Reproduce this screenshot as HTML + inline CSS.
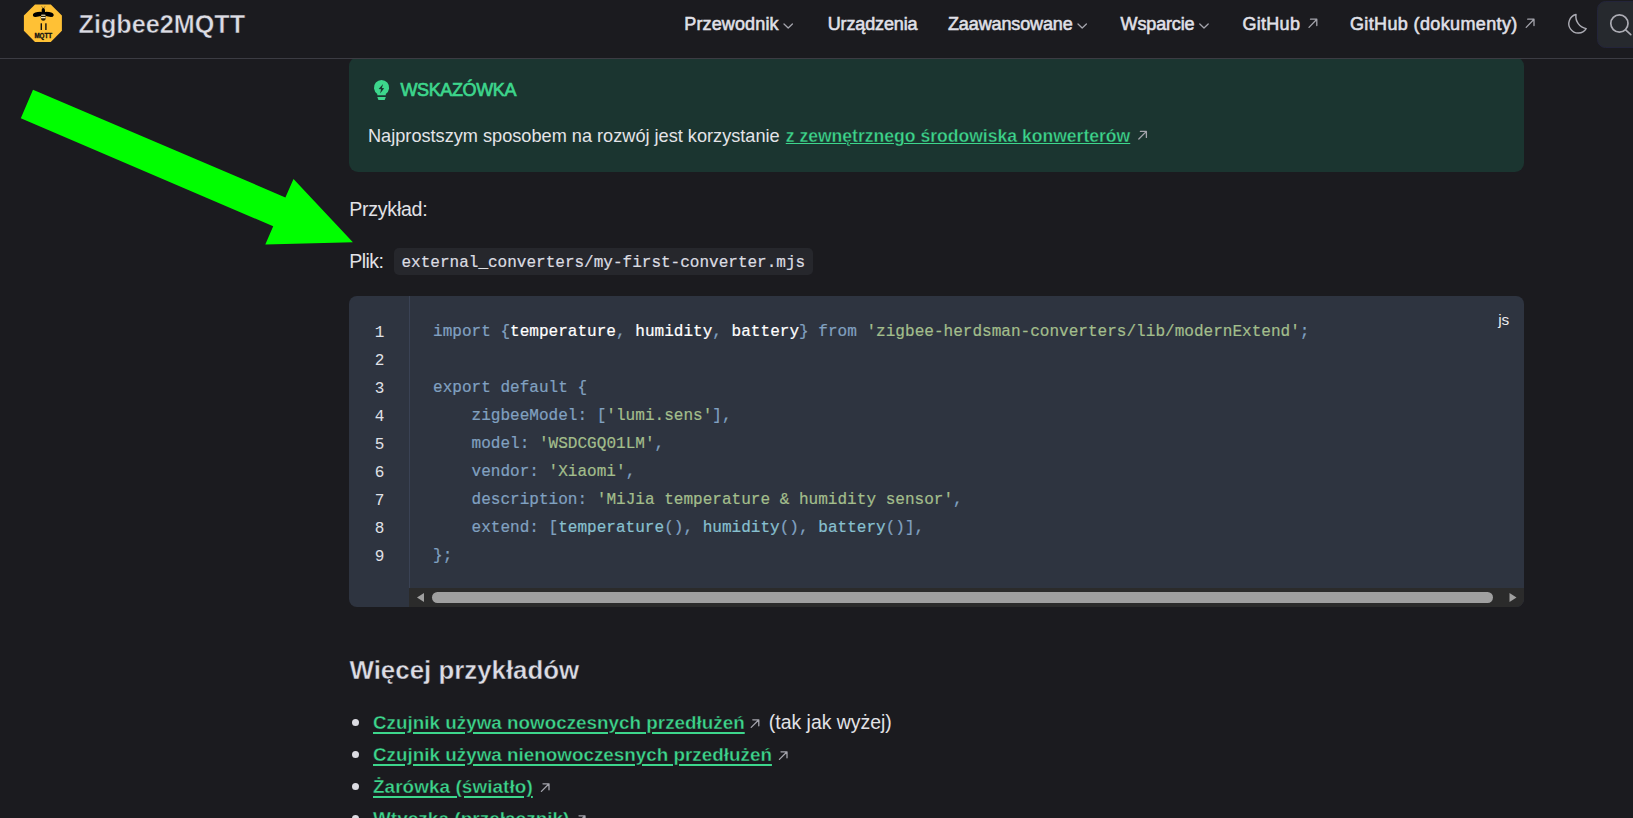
<!DOCTYPE html>
<html lang="pl">
<head>
<meta charset="utf-8">
<title>Zigbee2MQTT</title>
<style>
*{box-sizing:border-box;margin:0;padding:0}
html,body{width:1633px;height:818px;overflow:hidden;background:#1b1b1f;color:#e2e2e6;font-family:"Liberation Sans",sans-serif;}
body{position:relative}
.abs{position:absolute;white-space:nowrap}
#nav{position:absolute;left:0;top:0;width:1633px;height:59px;background:#1b1b1f;border-bottom:1px solid #3c3c43}
#brand{left:78.6px;top:9.3px;font-size:25.2px;line-height:30px;font-weight:700;color:#dcdce4;-webkit-text-stroke:0.5px #1b1b1f}
.nl{top:12.4px;font-size:18px;line-height:24px;font-weight:400;color:#e0e0e8;-webkit-text-stroke:0.55px #e0e0e8}
#search{position:absolute;left:1597px;top:1px;width:50px;height:46.5px;border-radius:8.5px;background:#26292e;border:1px solid #23243a}
#tip{position:absolute;left:349px;top:57px;width:1175px;height:115px;background:#1b3530;border-radius:9px}
#tiptitle{left:400.4px;top:78.2px;font-size:18px;line-height:24px;font-weight:400;letter-spacing:-0.36px;color:#3dd68c;-webkit-text-stroke:0.7px #3dd68c}
#tiptext{left:368px;top:123px;font-size:18.16px;line-height:26px;color:#e4e4e8}
#tiptext a{font-size:17.57px;margin-left:1px;text-underline-offset:1px;text-decoration-thickness:1.2px}
a.g{color:#3dd68c;font-weight:700;text-decoration:underline;text-decoration-thickness:1.5px;text-underline-offset:2px}
.p{left:349.3px;font-size:19.6px;line-height:28px;color:#e2e2e6}
#icode{left:394px;top:248px;height:27px;width:419px;background:#26272c;border-radius:5px}
#icodet{left:401.5px;top:251.2px;-webkit-text-stroke-width:0.2px;font-family:"Liberation Mono",monospace;font-size:16.03px;line-height:24px;color:#dcdde2}
#code{position:absolute;left:349px;top:296px;width:1175px;height:311px;background:#2e3440;border-radius:8px;overflow:hidden}
#gutter{position:absolute;left:0;top:0;width:61px;height:311px;border-right:1px solid #3a4254}
.ln{position:absolute;left:0;width:61px;text-align:center;font-family:"Liberation Mono",monospace;font-size:16px;line-height:28px;color:#e0e2e8}
pre{position:absolute;left:84px;top:21.6px;-webkit-text-stroke-width:0.2px;font-family:"Liberation Mono",monospace;font-size:16.06px;line-height:28px;color:#81a1c1}
.k,.b,.pr,.pp{color:#81a1c1}.w{color:#ffffff}.s{color:#a3be8c}.f{color:#88c0d0}
#js{left:1498.2px;top:307.8px;font-size:15.4px;line-height:24px;color:#ececf0}
#sb{position:absolute;left:60px;top:292px;width:1115px;height:19px;background:#2b2b2b}
#thumb{position:absolute;left:23px;top:4px;width:1061px;height:11px;border-radius:6px;background:#a0a0a0}
h2{left:349.5px;top:650.8px;font-size:25.87px;line-height:38px;font-weight:700;color:#dcdce4;-webkit-text-stroke:0.4px #1b1b1f}
.li{left:373px;font-size:19.43px;line-height:32px;color:#e2e2e6}
.li a{font-size:18.85px;text-underline-offset:2.8px}
.dot{position:absolute;left:351.8px;width:7.4px;height:7.4px;border-radius:50%;background:#dcdce2}
svg{position:absolute;overflow:visible}
.ic{fill:none;stroke:#a4a4ac;stroke-width:1.3;stroke-linecap:round;stroke-linejoin:round}
a.g span{-webkit-text-stroke:0.35px #1b1b1f}#tiptext a.g span{-webkit-text-stroke:0.35px #1b3530}</style>
</head>
<body>
<div id="tip"></div>
<div id="nav"></div>
<svg id="logo" style="left:0;top:0" width="70" height="50" viewBox="0 0 70 50">
<polygon points="35,4.4 50.8,4.4 61.9,15.5 61.9,30.8 50.8,41.9 35,41.9 23.9,30.8 23.9,15.5" fill="#ffc135"/>
<ellipse cx="38" cy="14.3" rx="5.2" ry="2.3" transform="rotate(-12 38 14.3)" fill="#000"/>
<ellipse cx="48.6" cy="14.3" rx="5.2" ry="2.3" transform="rotate(12 48.6 14.3)" fill="#000"/>
<ellipse cx="43.3" cy="11.3" rx="1.7" ry="3.3" fill="#000"/>
<ellipse cx="43.3" cy="17.2" rx="2.5" ry="3.5" fill="#2a2208"/>
<path d="M41.2 15.3h4.2M41 17.6h4.6" stroke="#fff0c8" stroke-width="1.1" fill="none"/>
<path d="M41.6 6.3l1.5 2.4M45 6.3l-1.5 2.4" stroke="#222" stroke-width="0.5" fill="none"/>
<rect x="40.6" y="23.3" width="1.4" height="6.7" fill="#111"/>
<rect x="45.2" y="23.3" width="1.4" height="6.7" fill="#111"/>
<text x="43.3" y="37.7" text-anchor="middle" font-family="Liberation Sans, sans-serif" font-weight="700" font-size="6.3" fill="#111" stroke="#111" stroke-width="0.3">MQTT</text>
</svg>
<div id="brand" class="abs">Zigbee2MQTT</div>
<div class="abs nl" style="left:684.3px;letter-spacing:0.13px">Przewodnik</div>
<div class="abs nl" style="left:827.7px;letter-spacing:-0.13px">Urządzenia</div>
<div class="abs nl" style="left:948px;letter-spacing:-0.13px">Zaawansowane</div>
<div class="abs nl" style="left:1120.6px;letter-spacing:-0.15px">Wsparcie</div>
<div class="abs nl" style="left:1242.5px;letter-spacing:0.28px">GitHub</div>
<div class="abs nl" style="left:1350px;letter-spacing:0.37px">GitHub (dokumenty)</div>
<svg style="left:0;top:0" width="1633" height="58" viewBox="0 0 1633 58">
<path class="ic" d="M784 24l4.2 4 4.2-4"/>
<path class="ic" d="M1078 24l4.2 4 4.2-4"/>
<path class="ic" d="M1199.8 24l4.2 4 4.2-4"/>
<path class="ic" d="M1309 27.4l7.6-7.9M1310.5 19.2h6.3v6.3"/>
<path class="ic" d="M1526.2 27.4l7.6-7.9M1527.7 19.2h6.3v6.3"/>
<path d="M1576 14.5A9.4 9.4 0 1 0 1586.2 28.6A12.5 12.5 0 0 1 1576 14.5Z" fill="none" stroke="#acacb4" stroke-width="1.4" stroke-linejoin="round"/>
</svg>
<div id="search"></div>
<svg style="left:1597px;top:0" width="36" height="50" viewBox="1597 0 36 50">
<circle cx="1619.4" cy="23.5" r="8.6" fill="none" stroke="#acacb4" stroke-width="1.7"/>
<path d="M1625.6 29.9l5.2 4.8" stroke="#acacb4" stroke-width="1.6" stroke-linecap="round"/>
</svg>

<svg style="left:370px;top:76px" width="24" height="28" viewBox="370 76 24 28">
<path d="M377.3 95.3V93.9A7.6 7.6 0 1 1 385.8 93.9V95.3Z" fill="#3dd68c"/>
<path d="M377.3 97.1h8.5l-0.9 2.3a.9.9 0 0 1-.8.6h-5.1a.9.9 0 0 1-.8-.6z" fill="#3dd68c"/>
<path d="M383.1 84l-4.5 5 2.5.3-1 4.1 4.1-5.1-2.3-.4z" fill="#1b3530"/>
</svg>
<div id="tiptitle" class="abs">WSKAZÓWKA</div>
<div id="tiptext" class="abs">Najprostszym sposobem na rozwój jest korzystanie <a class="g"><span>z zewnętrznego środowiska konwerterów</span></a></div>
<svg style="left:0;top:0" width="1633" height="818" viewBox="0 0 1633 818">
<path class="ic" d="M1138.8 139l7.4-7.4M1140.4 131.4h6v6"/>
<path class="ic" d="M751.2 727.4l7.4-7.4M752.8 719.8h6v6"/>
<path class="ic" d="M779.4 759.4l7.4-7.4M781 751.8h6v6"/>
<path class="ic" d="M541.4 791.4l7.4-7.4M543 783.8h6v6"/>
<path class="ic" d="M577.4 823.4l7.4-7.4M579 815.8h6v6"/>
</svg>

<div class="abs p" style="top:195.3px;letter-spacing:-0.28px">Przykład:</div>
<div class="abs p" style="top:247.1px;letter-spacing:-0.6px">Plik:</div>
<div id="icode" class="abs"></div>
<div id="icodet" class="abs">external_converters/my-first-converter.mjs</div>

<div id="code">
<div id="gutter"></div>
<div id="sb"><div id="thumb"></div>
<svg style="left:0;top:0" width="1115" height="19" viewBox="0 0 1115 19"><path d="M8 9.5l7-4.5v9z" fill="#a0a0a0"/><path d="M1107.5 9.5l-7-4.5v9z" fill="#a0a0a0"/></svg>
</div>
<div class="ln" style="top:22.6px">1</div><div class="ln" style="top:50.6px">2</div><div class="ln" style="top:78.6px">3</div><div class="ln" style="top:106.6px">4</div><div class="ln" style="top:134.6px">5</div><div class="ln" style="top:162.6px">6</div><div class="ln" style="top:190.6px">7</div><div class="ln" style="top:218.6px">8</div><div class="ln" style="top:246.6px">9</div>
<pre><span class="k">import</span> <span class="b">{</span><span class="w">temperature</span><span class="b">,</span> <span class="w">humidity</span><span class="b">,</span> <span class="w">battery</span><span class="b">}</span> <span class="k">from</span> <span class="s">'zigbee-herdsman-converters/lib/modernExtend'</span><span class="b">;</span>

<span class="pp">export default</span> <span class="b">{</span>
    <span class="pr">zigbeeModel</span><span class="b">: [</span><span class="s">'lumi.sens'</span><span class="b">],</span>
    <span class="pr">model</span><span class="b">:</span> <span class="s">'WSDCGQ01LM'</span><span class="b">,</span>
    <span class="pr">vendor</span><span class="b">:</span> <span class="s">'Xiaomi'</span><span class="b">,</span>
    <span class="pr">description</span><span class="b">:</span> <span class="s">'MiJia temperature &amp; humidity sensor'</span><span class="b">,</span>
    <span class="pr">extend</span><span class="b">: [</span><span class="f">temperature</span><span class="pp">()</span><span class="b">,</span> <span class="f">humidity</span><span class="pp">()</span><span class="b">,</span> <span class="f">battery</span><span class="pp">()</span><span class="b">],</span>
<span class="b">};</span></pre>
</div>
<div id="js" class="abs">js</div>

<h2 class="abs">Więcej przykładów</h2>
<div class="dot" style="top:718.8px"></div>
<div class="abs li" style="top:705.8px"><a class="g"><span>Czujnik używa nowoczesnych przedłużeń</span></a><span style="position:absolute;left:395.8px">(tak jak wyżej)</span></div>
<div class="dot" style="top:750.8px"></div>
<div class="abs li" style="top:737.8px"><a class="g"><span>Czujnik używa nienowoczesnych przedłużeń</span></a></div>
<div class="dot" style="top:782.8px"></div>
<div class="abs li" style="top:769.8px"><a class="g" style="letter-spacing:0.1px"><span>Żarówka (światło)</span></a></div>
<div class="dot" style="top:814.8px"></div>
<div class="abs li" style="top:801.8px"><a class="g" style="letter-spacing:0.08px"><span>Wtyczka (przełącznik)</span></a></div>

<svg style="left:0;top:0" width="1633" height="818" viewBox="0 0 1633 818">
<polygon points="33,89.8 285.4,197.4 293.5,179.1 352.9,242.2 265.3,244.6 273.2,226.3 20.8,118.2" fill="#00ff00"/>
</svg>
</body>
</html>
